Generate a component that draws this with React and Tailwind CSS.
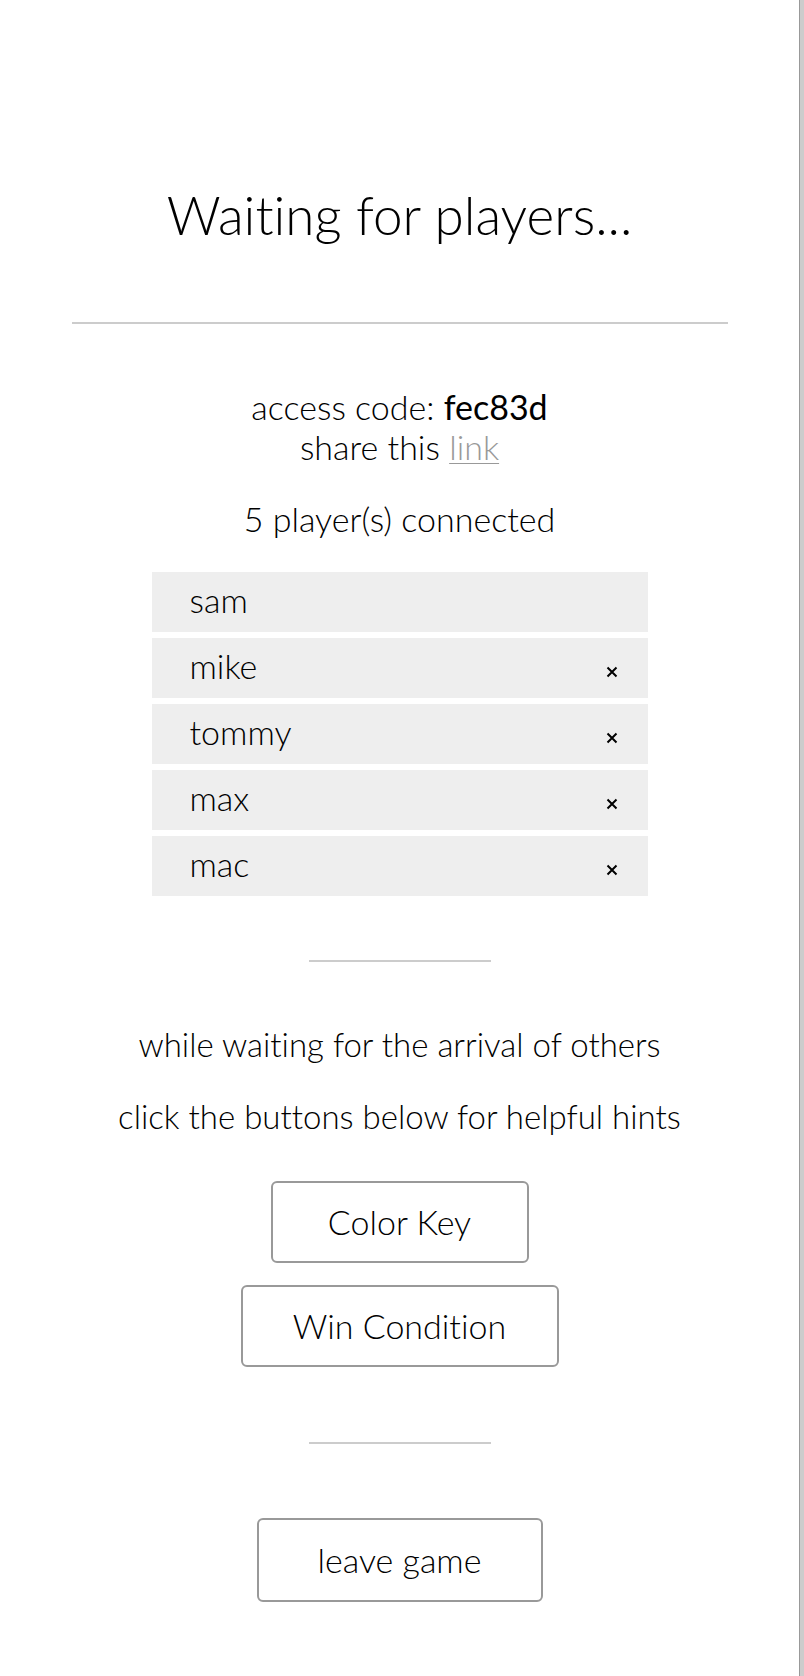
import React from 'react';

const players = [
  { name: 'sam', host: true },
  { name: 'mike' },
  { name: 'tommy' },
  { name: 'max' },
  { name: 'mac' },
];

const CloseMark = () => (
  <svg width="12" height="12" viewBox="0 0 12 12" className="mt-[7px] shrink-0" aria-hidden="true">
    <path d="M1.5 1.5 L10.5 10.5 M10.5 1.5 L1.5 10.5" stroke="#000" strokeWidth="2" strokeLinecap="butt" />
  </svg>
);

const HintButton = ({ label, width, height = 'h-[82px]' }) => (
  <button
    type="button"
    className={`${width} ${height} flex items-center justify-center rounded-md border-2 border-[#999] bg-white text-[34px] leading-[40px] font-light text-black`}
  >
    {label}
  </button>
);

export default function App() {
  return (
    <div
      className="flex min-h-screen bg-white [font-variant-ligatures:none]"
      style={{ fontFamily: 'Lato, "Open Sans", sans-serif' }}
    >
      <main className="w-[800px] shrink-0 border-r border-[#999] flex flex-col items-center text-black font-light pb-[74px]">
        <h1 className="mt-[188px] h-[53px] text-[53px] leading-[53px] font-light">Waiting for players...</h1>

        <div className="mt-[81px] h-[2px] w-[656px] bg-[#cccccc]" />

        {/* access info */}
        <div className="mt-[63px] text-[34px] leading-[40px] text-center">
          <p>
            access code: <span className="font-normal">fec83d</span>
          </p>
          <p>
            share this{' '}
            <a href="#" className="text-[#999] underline decoration-1 underline-offset-[3px]">
              link
            </a>
          </p>
        </div>

        <p className="mt-[32px] text-[34px] leading-[40px]">5 player(s) connected</p>

        <ul className="mt-[33px] w-[496px] flex flex-col gap-[6px]">
          {players.map((p) => (
            <li key={p.name} className="h-[60px] bg-[#eeeeee] flex items-center justify-between pl-[38px] pr-[30px]">
              <span className="text-[34px] leading-[40px] pb-1">{p.name}</span>
              {!p.host && <CloseMark />}
            </li>
          ))}
        </ul>

        <div className="mt-[64px] h-[2px] w-[182px] bg-[#cccccc]" />

        <p className="mt-[62px] text-[33px] leading-[40px]">while waiting for the arrival of others</p>
        <p className="mt-[32px] text-[33px] leading-[40px]">click the buttons below for helpful hints</p>

        <div className="mt-[45px] flex flex-col items-center gap-[22px]">
          <HintButton label="Color Key" width="w-[258px]" />
          <HintButton label="Win Condition" width="w-[318px]" />
        </div>

        <div className="mt-[75px] h-[2px] w-[182px] bg-[#cccccc]" />

        <div className="mt-[74px]">
          <HintButton label="leave game" width="w-[286px]" height="h-[84px]" />
        </div>
      </main>
      <div className="flex-1 bg-[#cccccc]" />
    </div>
  );
}
